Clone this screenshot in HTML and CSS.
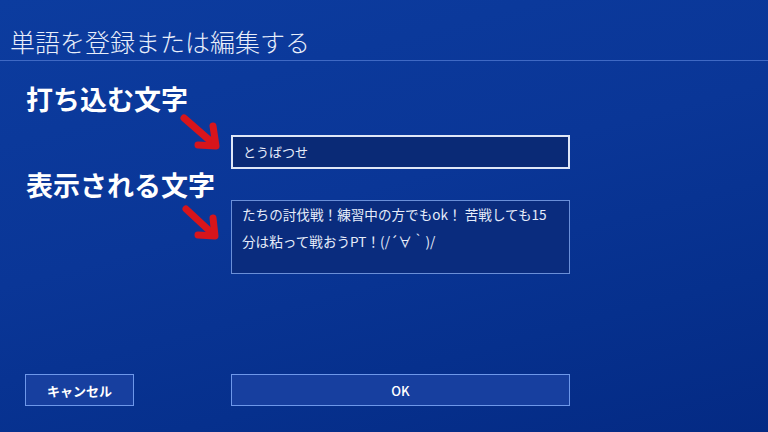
FILE: index.html
```html
<!DOCTYPE html>
<html lang="ja">
<head>
<meta charset="utf-8">
<title>単語を登録または編集する</title>
<link rel="stylesheet" href="styles.css">
</head>
<body>
<div class="screen">
  <header class="header">
    <h1 class="title">単語を登録または編集する</h1>
  </header>
  <main class="form">
    <div class="label label-first">打ち込む文字</div>
    <div class="field field-input">とうばつせ</div>
    <div class="label label-second">表示される文字</div>
    <div class="field field-area">たちの討伐戦！練習中の方でもok！ 苦戦しても15<br>分は粘って戦おうPT！(/´∀｀)/</div>
  </main>
  <footer class="buttons">
    <button class="btn btn-cancel">キャンセル</button>
    <button class="btn btn-ok">OK</button>
  </footer>
  <svg class="arrows" width="768" height="432" viewBox="0 0 768 432" aria-hidden="true">
    <g fill="none" stroke="#d8151b" stroke-width="7" stroke-linecap="round" stroke-linejoin="round">
      <path d="M184 118 L215 145"/>
      <path d="M213 126 L216 146 L198 145"/>
      <path d="M186 209 L214 235"/>
      <path d="M213 218 L215 236 L198 235"/>
    </g>
  </svg>
</div>
</body>
</html>
```

FILE: styles.css
```css
html, body {
  margin: 0;
  padding: 0;
}
body {
  width: 768px;
  height: 432px;
  overflow: hidden;
  font-family: "Noto Sans CJK JP", "Noto Sans", sans-serif;
  color: #ffffff;
}
.screen {
  position: relative;
  width: 768px;
  height: 432px;
  display: flex;
  flex-direction: column;
  background: linear-gradient(165deg, #0c3c9f 0%, #0a3697 45%, #06308d 75%, #042a84 100%);
}
.header {
  height: 61px;
  box-sizing: border-box;
  border-bottom: 1px solid #3f69c4;
  padding: 24px 0 0 10px;
}
.title {
  margin: 0;
  font-size: 25px;
  font-weight: 300;
  line-height: 34px;
  color: #e8eefa;
  letter-spacing: 0;
}
.form {
  display: grid;
  grid-template-columns: 205px 339px;
  padding-left: 26px;
}
.label {
  grid-column: 1 / 2;
  font-size: 27px;
  font-weight: 700;
  line-height: 31px;
  white-space: nowrap;
}
.label-first {
  grid-row: 1;
  grid-column: 1 / 3;
  margin-top: 22px;
}
.label-second {
  grid-row: 3;
}
.field {
  grid-column: 2 / 3;
  font-size: 13px;
  color: #e6ecfa;
  box-sizing: border-box;
}
.field-input {
  grid-row: 2;
  margin-top: 21px;
  height: 34px;
  border: 2px solid #dfe7f7;
  background: #0a2a76;
  padding: 0 10px;
  line-height: 30px;
}
.field-area {
  grid-row: 4;
  height: 74px;
  border: 1px solid #6a8fd8;
  background: #0a2c7e;
  padding: 0 10px;
  font-size: 13.6px;
  line-height: 27px;
}
.buttons {
  display: flex;
  gap: 97px;
  margin-top: 100px;
  padding-left: 25px;
}
.btn {
  height: 32px;
  box-sizing: border-box;
  border: 1px solid #6e98ea;
  background: #173f9f;
  color: #ffffff;
  font-family: "Noto Sans CJK JP", "Noto Sans", sans-serif;
  font-size: 13px;
  font-weight: 700;
  padding: 0;
}
.btn-cancel {
  width: 109px;
}
.btn-ok {
  width: 339px;
  font-weight: 500;
}
.arrows {
  position: absolute;
  left: 0;
  top: 0;
  pointer-events: none;
}
```
